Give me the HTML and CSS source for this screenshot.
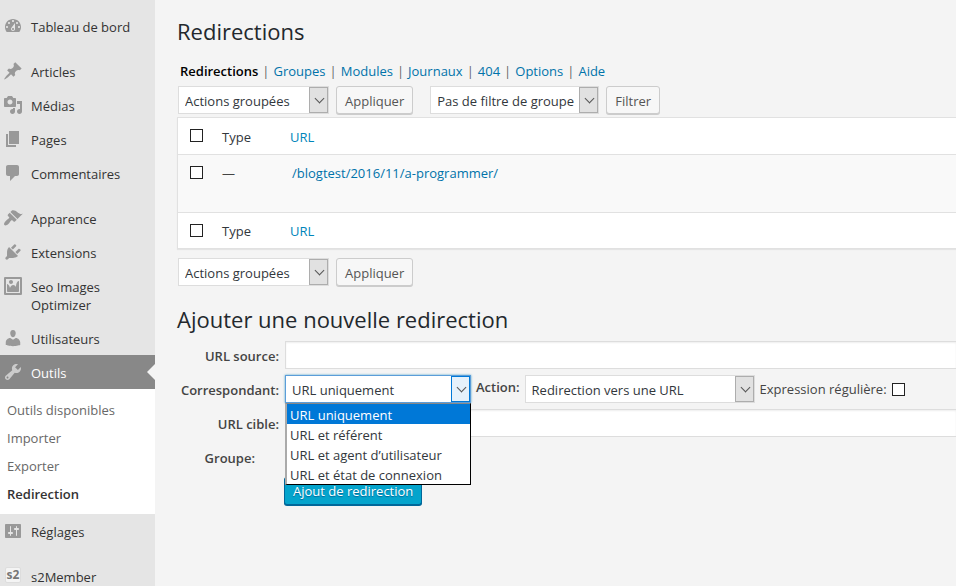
FILE: index.html
```html
<!DOCTYPE html>
<html lang="fr">
<head>
<meta charset="utf-8">
<meta name="viewport" content="width=device-width, initial-scale=1">
<title>Redirections</title>
<link rel="stylesheet" href="styles.css">
</head>
<body>
<div class="admin">
  <nav class="sidebar">
    <ul class="menu">
      <li><a class="menu-link" href="#"><svg class="icon" viewBox="0 0 20 20"><path d="M3.76 16h12.48c1.1-1.37 1.76-3.11 1.76-5 0-4.42-3.58-8-8-8s-8 3.58-8 8c0 1.89.66 3.63 1.76 5zM10 4c.55 0 1 .45 1 1s-.45 1-1 1-1-.45-1-1 .45-1 1-1zM6 6c.55 0 1 .45 1 1s-.45 1-1 1-1-.45-1-1 .45-1 1-1zm8 0c.55 0 1 .45 1 1s-.45 1-1 1-1-.45-1-1 .45-1 1-1zm-5.37 5.55L12 7v6c0 1.1-.9 2-2 2s-2-.9-2-2c0-.57.24-1.08.63-1.45zM4 10c.55 0 1 .45 1 1s-.45 1-1 1-1-.45-1-1 .45-1 1-1zm12 0c.55 0 1 .45 1 1s-.45 1-1 1-1-.45-1-1 .45-1 1-1zm-5 3c0-.55-.45-1-1-1s-1 .45-1 1 .45 1 1 1 1-.45 1-1z"/></svg>Tableau de bord</a></li>
      <li class="group-start"><a class="menu-link" href="#"><svg class="icon" viewBox="0 0 20 20"><path d="M10.44 3.02l1.82-1.82 6.36 6.35-1.83 1.82c-1.05-.68-2.48-.57-3.41.36l-.75.75c-.92.93-1.04 2.35-.35 3.41l-1.83 1.82-2.41-2.41-2.8 2.79c-.42.42-3.38 2.71-3.8 2.29s1.86-3.39 2.28-3.81l2.79-2.79L4.1 9.36l1.83-1.82c1.05.69 2.48.57 3.4-.36l.75-.75c.93-.92 1.05-2.35.36-3.41z"/></svg>Articles</a></li>
      <li><a class="menu-link" href="#"><svg class="icon" viewBox="0 0 20 20"><path d="M13 11V4c0-.55-.45-1-1-1h-1.67L9 1H5L3.67 3H2c-.55 0-1 .45-1 1v7c0 .55.45 1 1 1h10c.55 0 1-.45 1-1zM7 4.5c1.38 0 2.5 1.12 2.5 2.5S8.38 9.5 7 9.5 4.5 8.38 4.5 7 5.62 4.5 7 4.5zM14 6h5v10.5c0 1.38-1.12 2.5-2.5 2.5S14 17.88 14 16.5s1.12-2.5 2.5-2.5c.17 0 .34.02.5.05V9h-3V6zm-4 8.05V13h2v3.5c0 1.38-1.12 2.5-2.5 2.5S7 17.88 7 16.5 8.12 14 9.5 14c.17 0 .34.02.5.05z"/></svg>Médias</a></li>
      <li><a class="menu-link" href="#"><svg class="icon" viewBox="0 0 20 20"><path d="M6 15V2h10v13H6zm-1 1h8v2H3V5h2v11z"/></svg>Pages</a></li>
      <li><a class="menu-link" href="#"><svg class="icon" viewBox="0 0 20 20"><path d="M5 2h9c1.1 0 2 .9 2 2v7c0 1.1-.9 2-2 2h-2l-5 5v-5H5c-1.1 0-2-.9-2-2V4c0-1.1.9-2 2-2z"/></svg>Commentaires</a></li>
      <li class="group-start"><a class="menu-link" href="#"><svg class="icon" viewBox="0 0 20 20"><path d="M14.48 11.06L7.41 3.99l1.5-1.5c.5-.56 2.3-.47 3.51.32 1.21.8 1.43 1.28 2.91 2.1 1.18.64 2.45 1.26 4.45.85zm-.71.71L6.7 4.7 4.93 6.47c-.39.39-.39 1.02 0 1.41l1.06 1.06c.39.39.39 1.03 0 1.42-.6.6-1.43 1.11-2.21 1.69-.35.26-.7.53-1.01.84C1.43 14.23.4 16.08 1.4 17.07c.99 1 2.84-.03 4.18-1.36.31-.31.58-.66.85-1.02.57-.78 1.08-1.61 1.69-2.21.39-.39 1.02-.39 1.41 0l1.06 1.06c.39.39 1.02.39 1.41 0z"/></svg>Apparence</a></li>
      <li><a class="menu-link" href="#"><svg class="icon" viewBox="0 0 20 20"><path d="M13.11 4.36L9.87 7.6 8 5.73l3.24-3.24c.35-.34 1.05-.2 1.56.32.52.51.66 1.21.31 1.55zm-8 1.77l.91-1.12 9.01 9.01-1.19.84c-.71.71-2.63 1.16-3.82 1.16H6.14L4.9 17.26c-.59.59-1.54.59-2.12 0-.59-.58-.59-1.53 0-2.12l1.24-1.24v-3.88c0-1.13.4-3.19 1.09-3.89zm7.26 3.97l3.24-3.24c.34-.35 1.04-.21 1.55.31.52.51.66 1.21.31 1.55l-3.24 3.25z"/></svg>Extensions</a></li>
      <li><a class="menu-link" href="#"><svg class="icon" viewBox="0 0 20 20"><path d="M2.25 1h15.5c.69 0 1.25.56 1.25 1.25v15.5c0 .69-.56 1.25-1.25 1.25H2.25C1.56 19 1 18.44 1 17.75V2.25C1 1.56 1.56 1 2.25 1zM17 17V3H3v14h14zM10 6c0-1.1-.9-2-2-2s-2 .9-2 2 .9 2 2 2 2-.9 2-2zm3 5s0-6 3-6v10c0 .55-.45 1-1 1H5c-.55 0-1-.45-1-1V8c2 0 3 4 3 4s1-3 3-3 3 2 3 2z"/></svg>Seo Images Optimizer</a></li>
      <li><a class="menu-link" href="#"><svg class="icon" viewBox="0 0 20 20"><path d="M10 9.25c-2.27 0-2.73-3.44-2.73-3.44C7 4.02 7.82 2 9.97 2c2.16 0 2.98 2.02 2.71 3.81 0 0-.41 3.44-2.68 3.44zm0 2.57L12.72 10c2.39 0 4.52 2.33 4.52 4.53v2.49s-3.65 1.13-7.24 1.13c-3.65 0-7.24-1.13-7.24-1.13v-2.49c0-2.25 1.94-4.48 4.47-4.48z"/></svg>Utilisateurs</a></li>
      <li><a class="menu-link current" href="#"><svg class="icon" viewBox="0 0 20 20"><path d="M16.68 9.77c-1.34 1.34-3.3 1.67-4.95.99l-5.41 6.52c-.99.99-2.59.99-3.58 0s-.99-2.59 0-3.57l6.52-5.42c-.68-1.65-.35-3.61.99-4.95 1.28-1.28 3.12-1.62 4.72-1.06l-2.89 2.89 2.82 2.82 2.86-2.87c.53 1.58.18 3.39-1.08 4.65zM3.81 16.21c.4.39 1.04.39 1.43 0 .4-.4.4-1.04 0-1.43-.39-.4-1.03-.4-1.43 0-.39.39-.39 1.03 0 1.43z"/></svg>Outils</a>
        <ul class="submenu">
          <li><a href="#">Outils disponibles</a></li>
          <li><a href="#">Importer</a></li>
          <li><a href="#">Exporter</a></li>
          <li><a class="active" href="#">Redirection</a></li>
        </ul>
      </li>
      <li><a class="menu-link" href="#"><svg class="icon" viewBox="0 0 20 20"><path d="M18 16V4c0-.55-.45-1-1-1H3c-.55 0-1 .45-1 1v12c0 .55.45 1 1 1h14c.55 0 1-.45 1-1zM8 11h1c.55 0 1 .45 1 1s-.45 1-1 1H8v1.5c0 .28-.22.5-.5.5s-.5-.22-.5-.5V13H6c-.55 0-1-.45-1-1s.45-1 1-1h1V5.5c0-.28.22-.5.5-.5s.5.22.5.5V11zm5-2h-1c-.55 0-1-.45-1-1s.45-1 1-1h1V5.5c0-.28.22-.5.5-.5s.5.22.5.5V7h1c.55 0 1 .45 1 1s-.45 1-1 1h-1v5.5c0 .28-.22.5-.5.5s-.5-.22-.5-.5V9z"/></svg>Réglages</a></li>
      <li class="group-start"><a class="menu-link" href="#"><span class="badge">s2</span>s2Member</a></li>
    </ul>
  </nav>

  <main class="content">
    <h1>Redirections</h1>
    <ul class="tabs">
      <li><a class="active" href="#">Redirections</a></li>
      <li><a href="#">Groupes</a></li>
      <li><a href="#">Modules</a></li>
      <li><a href="#">Journaux</a></li>
      <li><a href="#">404</a></li>
      <li><a href="#">Options</a></li>
      <li><a href="#">Aide</a></li>
    </ul>

    <div class="toolbar">
      <span class="select bulk"><select aria-label="Actions groupées"><option>Actions groupées</option></select></span>
      <button class="button" type="button">Appliquer</button>
      <span class="select filter"><select aria-label="Pas de filtre de groupe"><option>Pas de filtre de groupe</option></select></span>
      <button class="button" type="button">Filtrer</button>
    </div>

    <table class="list">
      <thead>
        <tr><th class="check"><input type="checkbox" aria-label="Type"></th><th class="type">Type</th><th><a href="#">URL</a></th></tr>
      </thead>
      <tbody>
        <tr><td class="check"><input type="checkbox" aria-label="/blogtest/2016/11/a-programmer/"></td><td class="type">—</td><td><a href="#">/blogtest/2016/11/a-programmer/</a></td></tr>
      </tbody>
      <tfoot>
        <tr><th class="check"><input type="checkbox" aria-label="Type"></th><th class="type">Type</th><th><a href="#">URL</a></th></tr>
      </tfoot>
    </table>

    <div class="toolbar">
      <span class="select bulk"><select aria-label="Actions groupées"><option>Actions groupées</option></select></span>
      <button class="button" type="button">Appliquer</button>
    </div>

    <h2>Ajouter une nouvelle redirection</h2>
    <form class="form">
      <label class="name" for="source">URL source:</label>
      <input class="text" id="source" type="text">

      <label class="name" for="match">Correspondant:</label>
      <div class="fields">
        <span class="select match open">
          <select id="match"><option>URL uniquement</option></select>
          <ul class="options" role="listbox" aria-labelledby="match">
            <li role="option" aria-selected="true">URL uniquement</li>
            <li role="option">URL et référent</li>
            <li role="option">URL et agent d’utilisateur</li>
            <li role="option">URL et état de connexion</li>
          </ul>
        </span>
        <label class="action" for="action">Action:</label>
        <span class="select target"><select id="action"><option>Redirection vers une URL</option></select></span>
        <label for="regex">Expression régulière:</label>
        <input id="regex" type="checkbox">
      </div>

      <label class="name" for="target">URL cible:</label>
      <input class="text" id="target" type="text">

      <label class="name group" for="group">Groupe:</label>
      <div class="fields"><span class="select group-field"><select id="group"></select></span></div>

      <button class="button primary" type="submit">Ajout de redirection</button>
    </form>
  </main>
</div>
</body>
</html>
```
FILE: styles.css
```css
* { box-sizing: border-box; }

body {
  margin: 0;
  background: #f4f4f4;
  color: #444;
  font: 13px/18px "Open Sans", "Noto Sans", sans-serif;
}

ul { margin: 0; padding: 0; list-style: none; }
a { color: #0073aa; text-decoration: none; }
select, input, button { margin: 0; font: inherit; color: inherit; }

.admin { display: flex; min-height: 100vh; }

/* Sidebar */
.sidebar { flex: none; width: 155px; background: #e5e5e5; }
.menu { padding-top: 9px; }
.group-start { padding-top: 11px; }
.menu-link {
  display: flex;
  position: relative;
  padding: 9px 20px 7px 3px;
  gap: 8px;
  color: #333;
}
.icon { flex: none; width: 20px; height: 20px; margin: -2px 0 0; fill: #999; }
.current { background: #888; color: #fff; }
.current .icon { fill: #ccc; }
.current::after {
  content: "";
  position: absolute;
  top: 9px;
  right: 0;
  border: 8px solid transparent;
  border-right-color: #f4f4f4;
  border-left: 0;
}
.submenu { padding: 7px 0 6px; background: #fff; }
.submenu a { display: block; padding: 5px 7px; color: #686868; }
.submenu .active { color: #333; font-weight: 600; }
.badge {
  flex: none;
  width: 16px;
  height: 16px;
  margin: -1px 2px 0;
  border: 1px solid #ddd;
  border-radius: 2px;
  background: #f4f4f4;
  color: #777;
  font-size: 12px;
  font-weight: 700;
  line-height: 13px;
  text-align: center;
}

/* Content */
.content { flex: 1; min-width: 0; padding: 15px 0 0 22px; }
h1, h2 { margin: 0; color: #23282d; font-size: 22px; font-weight: 400; line-height: 32px; }
h2 { margin: 17px 0 6px; }

.tabs { display: flex; padding: 15px 3px 6px; }
.tabs li + li::before { content: "|"; margin: 0 4px; color: #666; }
.tabs .active { color: #000; font-weight: 600; }

.toolbar { display: flex; gap: 7px; padding-left: 1px; }
.select { position: relative; display: block; flex: none; height: 28px; }
.select select {
  display: block;
  width: 100%;
  height: 100%;
  padding: 2px 18px 0 6px;
  border: 1px solid #ddd;
  border-radius: 0;
  background: #fff;
  color: #32373c;
  appearance: none;
}
.select::before {
  content: "";
  position: absolute;
  top: 1px;
  right: 1px;
  bottom: 1px;
  width: 17px;
  border: 1px solid #adadad;
  background: #e1e1e1;
  pointer-events: none;
}
.select::after {
  content: "";
  position: absolute;
  top: 9px;
  right: 6px;
  width: 6px;
  height: 6px;
  border: solid #555;
  border-width: 0 1px 1px 0;
  transform: rotate(45deg);
  pointer-events: none;
}
.bulk { width: 151px; }
.filter { width: 169px; margin-left: 10px; }
.match { width: 186px; }
.target { width: 230px; }
.group-field { width: 160px; }

.button {
  height: 28px;
  padding: 1px 8px 0;
  border: 1px solid #ccc;
  border-radius: 3px;
  background: #f7f7f7;
  box-shadow: 0 1px 0 #ccc;
  color: #555;
}

input[type="checkbox"] {
  display: block;
  width: 13px;
  height: 13px;
  border: 1px solid #222;
  background: #fff;
  appearance: none;
}

.list {
  width: 100%;
  margin: 3px 0 9px;
  border: 1px solid #e1e1e1;
  border-right: 0;
  border-spacing: 0;
  background: #fff;
  box-shadow: 0 1px 1px #00000010;
}
.list th, .list td { padding: 10px 2px 8px; text-align: left; font-weight: 400; vertical-align: top; }
.list th { color: #32373c; }
.list th a { color: #0085ba; }
.list .check { width: 42px; padding: 11px 12px; }
.list .type { width: 68px; }
.list tbody td { height: 59px; padding-top: 9px; border: solid #e1e1e1; border-width: 1px 0; background: #f9f9f9; }
.list tbody td:last-child { padding-left: 4px; }
.list tfoot th { padding: 9px 2px 8px; }
.list tfoot .check { padding-bottom: 10px; }

/* Form */
.form {
  display: grid;
  grid-template-columns: 102px minmax(0, 1fr);
  grid-auto-rows: 28px;
  column-gap: 6px;
  row-gap: 6px;
}
.name { font-weight: 600; text-align: right; line-height: 30px; }
.group { padding-right: 24px; }
.text {
  width: 100%;
  border: 1px solid #ddd;
  border-right: 0;
  background: #fff;
  box-shadow: inset 0 1px 2px #00000012;
}
.fields { display: flex; align-items: center; gap: 5px; }
.fields label { line-height: 30px; }
.fields .action { align-self: flex-start; line-height: 24px; font-weight: 600; }
.open select { border-color: #5b9dd9; box-shadow: 0 0 2px #1e8cbecc; outline: 0; }
.open::before { border-color: #0078d7; background: #e5f1fb; }
.options {
  position: absolute;
  z-index: 2;
  top: 28px;
  right: 0;
  left: 0;
  border: 1px solid #000;
  border-top-color: #888;
  border-left: 2px solid #aaa;
  background: #fff;
  color: #32373c;
}
.options li { padding: 2px 3px 0; white-space: nowrap; }
.options [aria-selected] { background: #0078d7; color: #fff; }
.primary {
  grid-column: 2;
  justify-self: start;
  margin-left: -1px;
  padding-top: 0;
  border-color: #0073aa #006799 #006799;
  background: #04a4cc;
  box-shadow: 0 1px 0 #006799;
  color: #fff;
  text-shadow: 0 1px 1px #006799;
}
```
